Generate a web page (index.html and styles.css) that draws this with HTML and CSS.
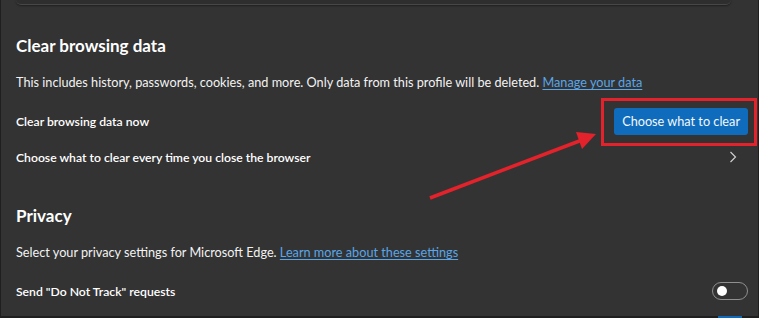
FILE: index.html
```html
<!DOCTYPE html>
<html lang="en">
<head>
    <meta charset="UTF-8">
    <title>Settings - Privacy</title>
    <link rel="stylesheet" href="styles.css">
</head>
<body>
    <div class="frame">
        <div class="prev-card"></div>

        <div class="content">
            <h2 class="section-title">Clear browsing data</h2>
            <p class="desc">This includes history, passwords, cookies, and more. Only data from this profile will be deleted. <a href="#">Manage your data</a></p>

            <div class="row">
                <span class="row-label">Clear browsing data now</span>
                <span class="btn-wrap">
                    <button class="btn-primary">Choose what to clear</button>
                    <span class="highlight-box"></span>
                </span>
            </div>

            <div class="row">
                <span class="row-label">Choose what to clear every time you close the browser</span>
                <svg class="chevron" width="10" height="12" viewBox="0 0 10 12">
                    <path d="M2.5 1 L7.5 6 L2.5 11" fill="none" stroke="#cfcfcf" stroke-width="1.2"/>
                </svg>
            </div>

            <h2 class="section-title privacy-title">Privacy</h2>
            <p class="desc">Select your privacy settings for Microsoft Edge. <a href="#">Learn more about these settings</a></p>

            <div class="row">
                <span class="row-label">Send "Do Not Track" requests</span>
                <span class="toggle"><span class="knob"></span></span>
            </div>
        </div>

        <div class="bottom-edge"><span class="edge-blue"></span></div>

        <!-- annotation arrow -->
        <svg class="arrow" width="759" height="318" viewBox="0 0 759 318">
            <line x1="430" y1="198" x2="582" y2="140" stroke="#e3222b" stroke-width="3.5"/>
            <polygon points="596,134 576,132 582,149" fill="#e3222b"/>
        </svg>
    </div>
</body>
</html>
```

FILE: styles.css
```css
html, body {
    margin: 0;
    padding: 0;
    background-color: #333333;
}

body {
    font-family: Lato, 'Open Sans', sans-serif;
    color: #ffffff;
    width: 759px;
    height: 318px;
    overflow: hidden;
}

.frame {
    position: relative;
    height: 318px;
    box-sizing: border-box;
    border-left: 1px solid #1f1f1f;
    border-right: 1px solid #1f1f1f;
    display: flex;
    flex-direction: column;
}

/* bottom of the card above, cut off by the screenshot */
.prev-card {
    height: 4px;
    margin: 0 27px 0 15px;
    background-color: #2e2e2e;
    border-bottom: 1px solid #474747;
    border-radius: 0 0 5px 5px;
    box-shadow: 0 1px 2px rgba(0, 0, 0, 0.4);
}

.content {
    flex: 1;
    padding: 0 10px 0 15px;
}

.section-title {
    margin: 27px 0 0;
    font-size: 17px;
    font-weight: 700;
    line-height: 28px;
}

.privacy-title {
    margin-top: 27px;
}

.desc {
    margin: 12px 0 0;
    font-size: 12.7px;
    line-height: 20px;
    color: #f2f2f2;
}

.desc a {
    color: #5aa6e6;
    text-decoration: underline;
    text-underline-offset: 2px;
}

.row {
    display: flex;
    align-items: center;
    justify-content: space-between;
    height: 36px;
}

.desc + .row {
    margin-top: 11px;
}

.row-label {
    font-size: 12.2px;
    font-weight: 600;
}

.btn-wrap {
    position: relative;
    display: flex;
}

.btn-primary {
    height: 27px;
    padding: 0 8px;
    border: none;
    border-radius: 3px;
    background-color: #0f6cbd;
    color: #f4f8fc;
    font-family: inherit;
    font-size: 12.7px;
}

.highlight-box {
    position: absolute;
    left: -13px;
    top: -10px;
    right: -9px;
    bottom: -11px;
    border: 3px solid #e3222b;
}

.chevron {
    margin-right: 10px;
}

.toggle {
    position: relative;
    height: 16px;
    border: 1px solid #8f8f8f;
    border-radius: 10px;
    display: flex;
    align-items: center;
    padding-left: 4px;
    box-sizing: content-box;
    width: 30px;
}

.knob {
    width: 10px;
    height: 10px;
    border-radius: 50%;
    background-color: #ffffff;
}

.bottom-edge {
    height: 2px;
    background-color: #1f1f1f;
    display: flex;
}

.edge-blue {
    margin-left: auto;
    margin-right: 16px;
    width: 24px;
    background-color: #0f6cbd;
}

.arrow {
    position: absolute;
    left: -1px;
    top: 0;
    pointer-events: none;
}
```
